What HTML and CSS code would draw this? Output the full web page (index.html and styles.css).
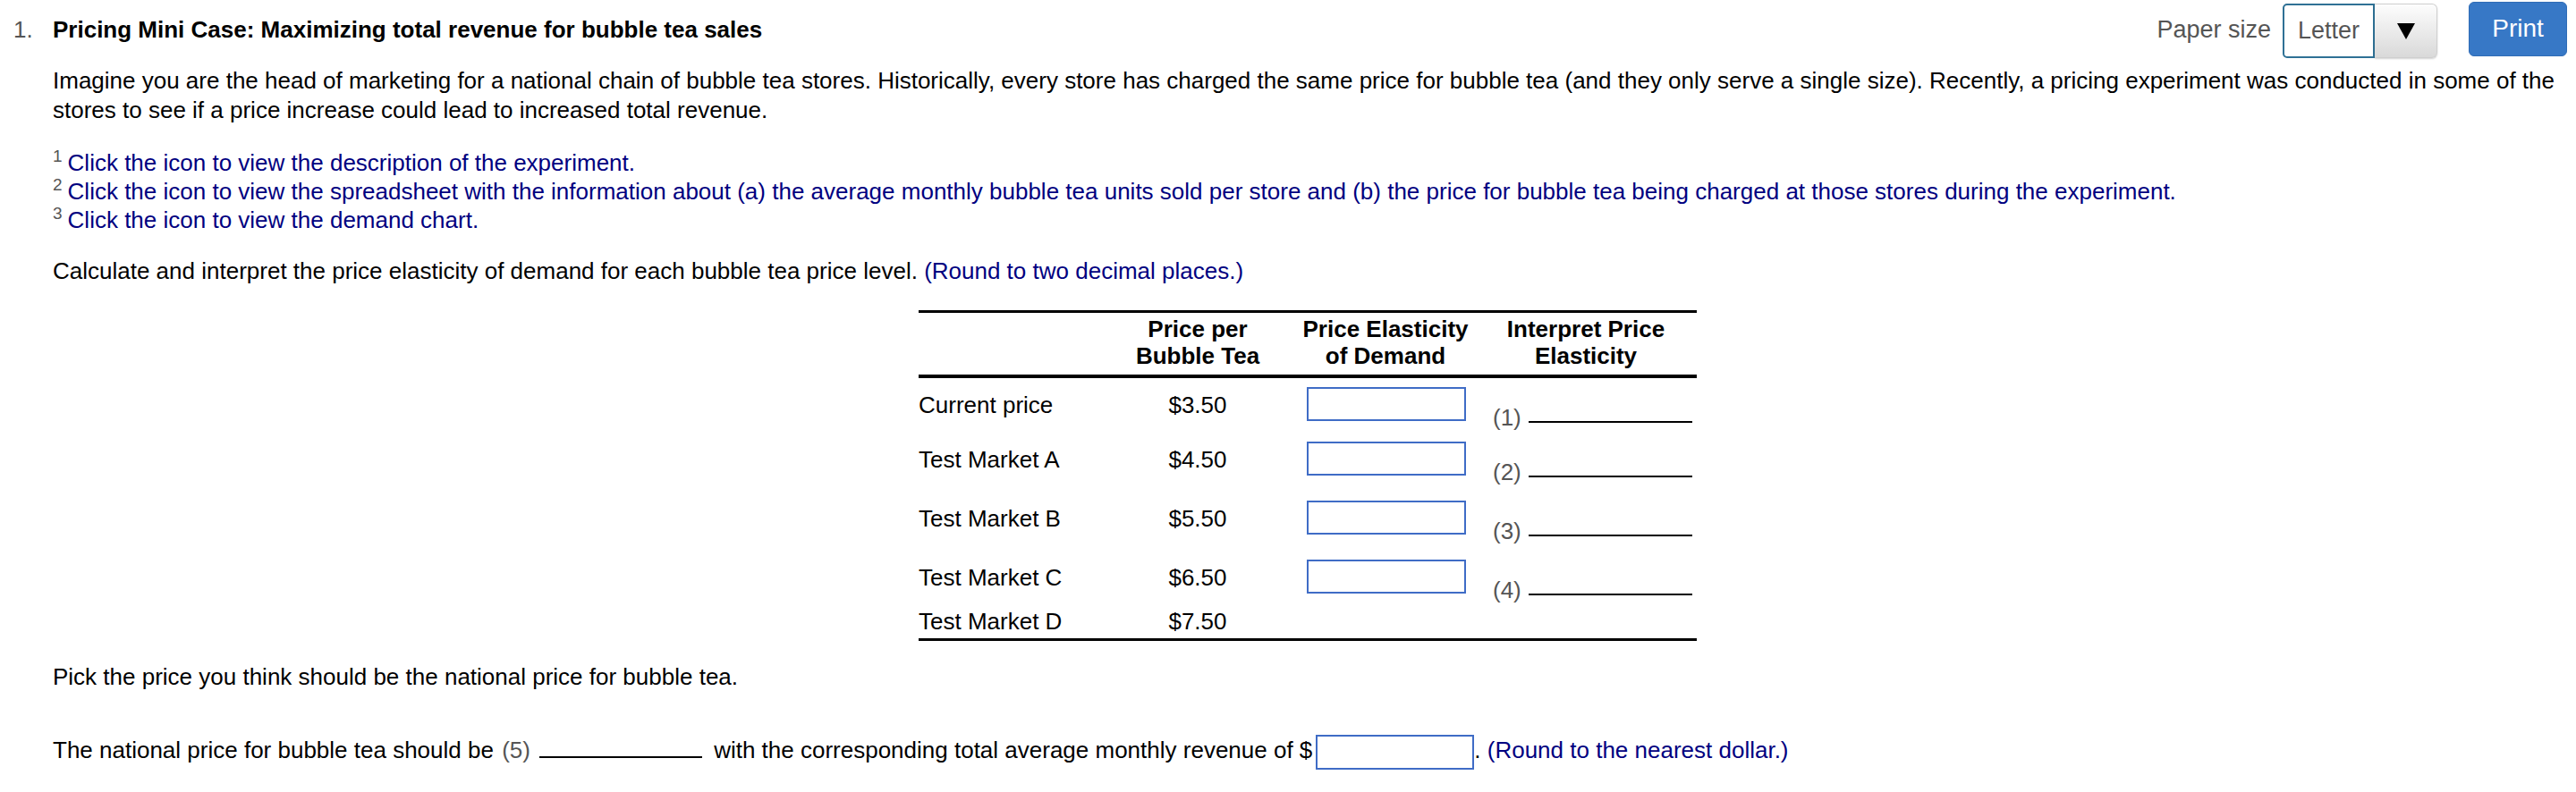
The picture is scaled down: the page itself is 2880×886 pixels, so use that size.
FILE: index.html
```html
<!DOCTYPE html>
<html lang="en">
<head>
<meta charset="utf-8">
<title>Pricing Mini Case</title>
<link rel="stylesheet" href="styles.css">
</head>
<body>
<div class="page">
  <header class="top">
    <div class="qnum">1.</div>
    <h1 class="title">Pricing Mini Case: Maximizing total revenue for bubble tea sales</h1>
    <div class="tools">
      <span class="paper-label">Paper size</span>
      <div class="select">
        <span class="select-value">Letter</span>
        <span class="select-btn"><svg width="20" height="18" viewBox="0 0 20 18"><polygon points="0,0 20,0 10,18" fill="#000"/></svg></span>
      </div>
      <button class="print" type="button">Print</button>
    </div>
  </header>

  <main class="content">
    <p class="intro">Imagine you are the head of marketing for a national chain of bubble tea stores. Historically, every store has charged the same price for bubble tea (and they only serve a single size). Recently, a pricing experiment was conducted in some of the stores to see if a price increase could lead to increased total revenue.</p>

    <ul class="notes">
      <li><sup class="fn">1</sup><span class="link">Click the icon to view the description of the experiment.</span></li>
      <li><sup class="fn">2</sup><span class="link">Click the icon to view the spreadsheet with the information about (a) the average monthly bubble tea units sold per store and (b) the price for bubble tea being charged at those stores during the experiment.</span></li>
      <li><sup class="fn">3</sup><span class="link">Click the icon to view the demand chart.</span></li>
    </ul>

    <p class="instr">Calculate and interpret the price elasticity of demand for each bubble tea price level. <span class="hint">(Round to two decimal places.)</span></p>

    <table class="tbl">
      <colgroup>
        <col class="w1"><col class="w2"><col class="w3"><col class="w4">
      </colgroup>
      <thead>
        <tr>
          <th></th>
          <th>Price per<br>Bubble Tea</th>
          <th>Price Elasticity<br>of Demand</th>
          <th class="h4">Interpret Price<br>Elasticity</th>
        </tr>
      </thead>
      <tbody>
        <tr class="r first">
          <td class="lbl">Current price</td>
          <td class="price">$3.50</td>
          <td class="inp"><input class="box" type="text" aria-label="Elasticity current price"></td>
          <td class="dd"><span class="num">(1)</span><span class="blank"></span></td>
        </tr>
        <tr class="r">
          <td class="lbl">Test Market A</td>
          <td class="price">$4.50</td>
          <td class="inp"><input class="box" type="text" aria-label="Elasticity test market A"></td>
          <td class="dd"><span class="num">(2)</span><span class="blank"></span></td>
        </tr>
        <tr class="r">
          <td class="lbl">Test Market B</td>
          <td class="price">$5.50</td>
          <td class="inp"><input class="box" type="text" aria-label="Elasticity test market B"></td>
          <td class="dd"><span class="num">(3)</span><span class="blank"></span></td>
        </tr>
        <tr class="r fourth">
          <td class="lbl">Test Market C</td>
          <td class="price">$6.50</td>
          <td class="inp"><input class="box" type="text" aria-label="Elasticity test market C"></td>
          <td class="dd"><span class="num">(4)</span><span class="blank"></span></td>
        </tr>
        <tr class="last">
          <td class="lbl">Test Market D</td>
          <td class="price">$7.50</td>
          <td></td>
          <td></td>
        </tr>
      </tbody>
    </table>

    <p class="pick">Pick the price you think should be the national price for bubble tea.</p>

    <p class="answer">The national price for bubble tea should be <span class="num">(5)</span><span class="blank wide"></span> with the corresponding total average monthly revenue of $<input class="box rev" type="text" aria-label="Revenue">. <span class="hint">(Round to the nearest dollar.)</span></p>
  </main>
</div>
</body>
</html>
```

FILE: styles.css
```css
* { box-sizing: border-box; }

body {
  margin: 0;
  font-family: "Liberation Sans", Arial, sans-serif;
  font-size: 26px;
  color: #000;
  background: #fff;
}

.top {
  display: flex;
  align-items: center;
  height: 66px;
  padding-right: 10px;
}

.qnum {
  width: 59px;
  padding-left: 15px;
  color: #555;
}

.title {
  flex: 1;
  margin: 0;
  font-size: 26px;
  font-weight: bold;
}

.tools {
  display: flex;
  align-items: center;
}

.paper-label {
  font-size: 27px;
  color: #555;
  margin-right: 13px;
}

.select {
  display: flex;
  height: 61px;
  margin-top: 3px;
}

.select-value {
  display: flex;
  align-items: center;
  width: 103px;
  padding-left: 15px;
  border: 2px solid #2f7195;
  border-radius: 5px 0 0 5px;
  background: #fff;
  color: #555;
  font-size: 27px;
}

.select-btn {
  display: flex;
  align-items: center;
  justify-content: center;
  width: 70px;
  border: 1px solid #cfcfcf;
  border-left: none;
  border-radius: 0 6px 6px 0;
  background: linear-gradient(#fdfdfd, #d9d9d9);
  box-shadow: 0 1px 2px rgba(0, 0, 0, 0.18);
}

.print {
  width: 110px;
  height: 61px;
  margin-left: 35px;
  margin-top: -2px;
  background: #3778c6;
  color: #fff;
  border: 1px solid #2f6cb6;
  border-radius: 6px;
  font-family: "Liberation Sans", Arial, sans-serif;
  font-size: 28px;
}

.content {
  padding: 0 15px 0 59px;
}

.intro {
  margin: 8px 0 0;
  line-height: 33px;
}

.notes {
  list-style: none;
  margin: 26px 0 0;
  padding: 0;
  line-height: 32px;
}

.fn {
  color: #555;
  font-size: 19px;
  vertical-align: 10px;
  line-height: 0;
  margin-right: 6px;
}

.link { color: #000080; }
.hint { color: #000080; }

.instr {
  margin: 25px 0 0;
  line-height: 32px;
}

.tbl {
  width: 870px;
  margin: 28px auto 0;
  border-collapse: collapse;
  border-top: 3px solid #000;
  border-bottom: 3px solid #000;
}

.w1 { width: 222px; }
.w2 { width: 180px; }
.w3 { width: 240px; }
.w4 { width: 228px; }

.tbl th {
  font-weight: bold;
  line-height: 30px;
  padding: 3px 0 6px;
  text-align: center;
  vertical-align: bottom;
  border-bottom: 4px solid #000;
}

.tbl th.h4 { padding-right: 20px; }

.tbl td {
  padding: 0;
  vertical-align: top;
}

.r { height: 66px; }
.r.first { height: 63px; }
.r.fourth { height: 64px; }

.r td.lbl,
.r td.price {
  padding-top: 11px;
  line-height: 38px;
}

.tbl td.price { text-align: center; }

.tbl td.inp {
  padding-top: 10px;
  padding-left: 32px;
}

.box {
  display: block;
  width: 178px;
  height: 38px;
  border: 2px solid #3f6cc6;
  background: #fff;
  outline: none;
  padding: 0 6px;
  font: inherit;
}

.tbl td.dd {
  padding-top: 31px;
  line-height: 26px;
  white-space: nowrap;
}

.num { color: #555; }

.blank {
  display: inline-block;
  width: 183px;
  height: 0;
  margin-left: 8px;
  border-bottom: 2px solid #000;
  vertical-align: 3px;
}

.last td {
  line-height: 30px;
  padding-bottom: 4px;
}

.pick {
  margin: 24px 0 0;
  line-height: 32px;
}

.answer {
  margin: 46px 0 0;
  line-height: 40px;
  white-space: nowrap;
}

.answer .num { margin-left: 2px; }

.blank.wide {
  width: 182px;
  margin-left: 10px;
  margin-right: 6px;
  vertical-align: 0;
}

.box.rev {
  display: inline-block;
  width: 177px;
  height: 39px;
  margin-left: 4px;
  vertical-align: middle;
}
```
